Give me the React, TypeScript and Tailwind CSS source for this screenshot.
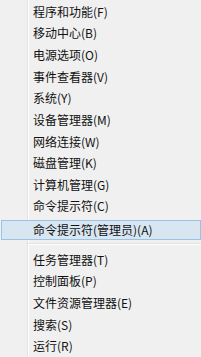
const topItems = [
  '程序和功能(F)',
  '移动中心(B)',
  '电源选项(O)',
  '事件查看器(V)',
  '系统(Y)',
  '设备管理器(M)',
  '网络连接(W)',
  '磁盘管理(K)',
  '计算机管理(G)',
  '命令提示符(C)',
  '命令提示符(管理员)(A)',
];

const bottomItems = ['任务管理器(T)', '控制面板(P)', '文件资源管理器(E)', '搜索(S)', '运行(R)'];

const MenuItem = ({ label, active }: { label: string; active?: boolean }) =>
  active ? (
    <div className="mt-[3px] ml-px h-[19.7px] flex items-center bg-[#d8e6f2] border border-[#9ac3e8]">
      <span className="pl-[31px] text-[12px] leading-none text-[#111]">{label}</span>
    </div>
  ) : (
    <div className="h-[21.7px] flex items-center">
      <span className="pl-[33px] text-[12px] leading-none text-[#111]">{label}</span>
    </div>
  );

const App = () => {
  return (
    <div
      className="w-[201px] h-[357px] overflow-hidden pt-px flex flex-col bg-[linear-gradient(to_right,#f0f0f0_27px,#e2e3e3_27px,#e2e3e3_28px,#ffffff_28px,#ffffff_29px,#f0f0f0_29px)]"
      style={{ fontFamily: '"Microsoft YaHei", "Noto Sans CJK SC", sans-serif' }}
    >
      {topItems.map((label, i) => (
        <MenuItem key={label} label={label} active={i === topItems.length - 1} />
      ))}
      <div className="h-[9px] flex flex-col justify-center pl-[28px]">
        <div className="h-px bg-[#e2e3e3]" />
        <div className="h-px bg-white" />
      </div>
      {bottomItems.map((label) => (
        <MenuItem key={label} label={label} />
      ))}
    </div>
  );
};

export default App;
